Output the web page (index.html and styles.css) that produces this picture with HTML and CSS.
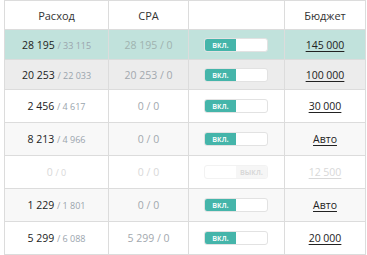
FILE: index.html
```html
<!DOCTYPE html>
<html lang="ru">
<head>
    <meta charset="UTF-8">
    <title>Кампании</title>
    <link rel="stylesheet" href="styles.css">
</head>
<body>

<table class="stats">
    <colgroup>
        <col class="c-spend">
        <col class="c-cpa">
        <col class="c-switch">
        <col class="c-budget">
    </colgroup>
    <thead>
        <tr>
            <th>Расход</th>
            <th>CPA</th>
            <th></th>
            <th>Бюджет</th>
        </tr>
    </thead>
    <tbody>
        <tr class="row-short selected">
            <td><b>28 195</b> <span class="sub">/ 33 115</span></td>
            <td class="cpa">28 195 / 0</td>
            <td><div class="toggle on"><span class="knob">вкл.</span></div></td>
            <td><a href="#">145 000</a></td>
        </tr>
        <tr class="row-short hovered">
            <td><b>20 253</b> <span class="sub">/ 22 033</span></td>
            <td class="cpa">20 253 / 0</td>
            <td><div class="toggle on"><span class="knob">вкл.</span></div></td>
            <td><a href="#">100 000</a></td>
        </tr>
        <tr>
            <td><b>2 456</b> <span class="sub">/ 4 617</span></td>
            <td class="cpa">0 / 0</td>
            <td><div class="toggle on"><span class="knob">вкл.</span></div></td>
            <td><a href="#">30 000</a></td>
        </tr>
        <tr class="odd">
            <td><b>8 213</b> <span class="sub">/ 4 966</span></td>
            <td class="cpa">0 / 0</td>
            <td><div class="toggle on"><span class="knob">вкл.</span></div></td>
            <td><a href="#">Авто</a></td>
        </tr>
        <tr class="disabled">
            <td><b>0</b> <span class="sub">/ 0</span></td>
            <td class="cpa">0 / 0</td>
            <td><div class="toggle off"><span class="knob">выкл.</span></div></td>
            <td><a href="#">12 500</a></td>
        </tr>
        <tr class="odd">
            <td><b>1 229</b> <span class="sub">/ 1 801</span></td>
            <td class="cpa">0 / 0</td>
            <td><div class="toggle on"><span class="knob">вкл.</span></div></td>
            <td><a href="#">Авто</a></td>
        </tr>
        <tr>
            <td><b>5 299</b> <span class="sub">/ 6 088</span></td>
            <td class="cpa">5 299 / 0</td>
            <td><div class="toggle on"><span class="knob">вкл.</span></div></td>
            <td><a href="#">20 000</a></td>
        </tr>
    </tbody>
</table>

</body>
</html>
```

FILE: styles.css
```css
body {
    margin: 0;
    padding: 0 0 0 4px;
    background-color: #fff;
    font-family: "Open Sans", Arial, sans-serif;
    color: #333;
}
.stats {
    border-collapse: collapse;
    table-layout: fixed;
    width: 361px;
}
.c-spend { width: 104px; }
.c-cpa { width: 80px; }
.c-switch { width: 96px; }
.c-budget { width: 81px; }
.stats th,
.stats td {
    border: 1px solid #dcdcdc;
    text-align: center;
    vertical-align: middle;
    padding: 0;
    white-space: nowrap;
}
.stats th {
    height: 28px;
    font-size: 11px;
    font-weight: normal;
    color: #333;
}
.stats td {
    height: 32px;
    font-size: 10.5px;
}
.stats tr.row-short td {
    height: 29px;
}
.stats b {
    font-weight: normal;
    color: #222;
}
.sub {
    font-size: 9px;
    color: #9aa4ad;
}
.cpa {
    font-size: 9px;
    color: #a2a8ae;
}
.stats a {
    color: #222;
    text-decoration: underline;
    text-underline-offset: 2px;
}
.selected td {
    background-color: #c1e2dc;
}
.selected .cpa {
    color: #9fb2af;
}
.hovered td {
    background-color: #ececec;
}
.odd td {
    background-color: #f8f8f8;
}
.disabled td,
.disabled b,
.disabled .sub,
.disabled .cpa,
.disabled a {
    color: #d8d8d8;
}
.toggle {
    display: flex;
    width: 62px;
    height: 12px;
    margin: 0 auto 0 15px;
    border: 1px solid #e2e2e2;
    border-radius: 3px;
    background-color: #fff;
    overflow: hidden;
}
.knob {
    width: 31px;
    height: 12px;
    line-height: 12px;
    font-size: 8px;
    font-weight: 600;
    text-align: center;
}
.toggle.on .knob {
    background-color: #45b5aa;
    color: #fff;
}
.toggle.off {
    border-color: #f2f2f2;
    justify-content: flex-end;
}
.toggle.off .knob {
    width: 31px;
    background-color: #f6f6f6;
    color: #d6d6d6;
}
```
